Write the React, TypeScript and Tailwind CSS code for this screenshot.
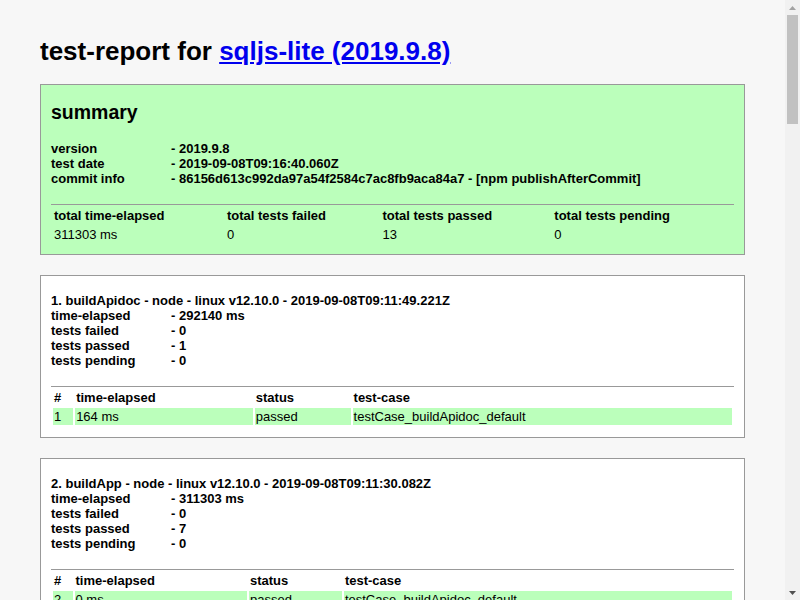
import React from "react";

type TestCase = { elapsed: string; status: string; name: string };

type Report = {
  title: string;
  elapsed: string;
  failed: number;
  passed: number;
  pending: number;
  tests: TestCase[];
};

const reports: Report[] = [
  {
    title: "1. buildApidoc - node - linux v12.10.0 - 2019-09-08T09:11:49.221Z",
    elapsed: "292140 ms",
    failed: 0,
    passed: 1,
    pending: 0,
    tests: [{ elapsed: "164 ms", status: "passed", name: "testCase_buildApidoc_default" }],
  },
  {
    title: "2. buildApp - node - linux v12.10.0 - 2019-09-08T09:11:30.082Z",
    elapsed: "311303 ms",
    failed: 0,
    passed: 7,
    pending: 0,
    tests: [
      { elapsed: "0 ms", status: "passed", name: "testCase_buildApidoc_default" },
      { elapsed: "2118 ms", status: "passed", name: "testCase_buildApp_default" },
      { elapsed: "1 ms", status: "passed", name: "testCase_buildLib_default" },
      { elapsed: "3 ms", status: "passed", name: "testCase_buildReadme_default" },
      { elapsed: "2 ms", status: "passed", name: "testCase_buildTest_default" },
      { elapsed: "4 ms", status: "passed", name: "testCase_webpage_default" },
      { elapsed: "1 ms", status: "passed", name: "testCase_buildApp_error" },
    ],
  },
  {
    title: "3. test - node - linux v12.10.0 - 2019-09-08T09:16:38.921Z",
    elapsed: "1139 ms",
    failed: 0,
    passed: 5,
    pending: 0,
    tests: [
      { elapsed: "12 ms", status: "passed", name: "testCase_sqljsExec_default" },
      { elapsed: "8 ms", status: "passed", name: "testCase_sqljsInit_default" },
      { elapsed: "3 ms", status: "passed", name: "testCase_sqljsRun_default" },
      { elapsed: "1 ms", status: "passed", name: "testCase_sqljsExport_default" },
      { elapsed: "2 ms", status: "passed", name: "testCase_sqljsClose_default" },
    ],
  },
];

const font = { fontFamily: '"Liberation Sans", Arial, sans-serif' };

const InfoRows = ({ rows }: { rows: [string, string][] }) => (
  <div className="grid grid-cols-[120px_1fr] font-bold leading-[15px]">
    {rows.map(([label, value]) => (
      <React.Fragment key={label}>
        <div>{label}</div>
        <div>- {value}</div>
      </React.Fragment>
    ))}
  </div>
);

const ReportBox = ({ report, offset }: { report: Report; offset: number }) => (
  <div className="mt-5 border border-[#999] bg-white px-2.5 pb-[10px] pt-[17px]">
    <div className="font-bold leading-[15px]">{report.title}</div>
    <InfoRows
      rows={[
        ["time-elapsed", report.elapsed],
        ["tests failed", String(report.failed)],
        ["tests passed", String(report.passed)],
        ["tests pending", String(report.pending)],
      ]}
    />
    <table className="mt-[18px] w-full border-separate border-spacing-0.5 border-t border-[#999] leading-[15px]">
      <thead>
        <tr>
          <th className="p-px text-left font-bold">#</th>
          <th className="p-px text-left font-bold">time-elapsed</th>
          <th className="p-px text-left font-bold">status</th>
          <th className="p-px text-left font-bold">test-case</th>
        </tr>
      </thead>
      <tbody>
        {report.tests.map((test, i) => (
          <tr key={test.name + i}>
            <td className="bg-[#bbffbb] p-px">{offset + i + 1}</td>
            <td className="bg-[#bbffbb] p-px">{test.elapsed}</td>
            <td className="bg-[#bbffbb] p-px">{test.status}</td>
            <td className="bg-[#bbffbb] p-px">{test.name}</td>
          </tr>
        ))}
      </tbody>
    </table>
  </div>
);

// browser scrollbar as seen in the screenshot
const Scrollbar = () => (
  <div className="flex w-[15px] shrink-0 flex-col items-center bg-[#f1f1f1]">
    <div className="flex h-[15px] items-center justify-center">
      <svg width="7" height="4" viewBox="0 0 7 4">
        <path d="M3.5 0 L7 4 L0 4 Z" fill="#a3a3a3" />
      </svg>
    </div>
    <div className="h-[109px] w-[11px] bg-[#c1c1c1]" />
    <div className="flex-1" />
    <div className="flex h-[15px] items-center justify-center">
      <svg width="7" height="4" viewBox="0 0 7 4">
        <path d="M0 0 L7 0 L3.5 4 Z" fill="#505050" />
      </svg>
    </div>
  </div>
);

const App = () => {
  let offset = 0;

  return (
    <div className="flex h-screen overflow-hidden bg-[#f7f7f7] text-[13px] text-black" style={font}>
      <div className="min-w-0 flex-1 overflow-hidden px-10 pb-10 pt-9">
        <h1 className="mb-[18px] text-[26px] font-bold leading-[30px]">
          test-report for{" "}
          <a href="#" className="text-[#0000ee] underline">
            sqljs-lite (2019.9.8)
          </a>
        </h1>

        <div className="border border-[#999] bg-[#bbffbb] px-2.5 pb-[9px] pt-4">
          <h2 className="mb-[18px] text-[19.5px] font-bold leading-[22px]">summary</h2>
          <InfoRows
            rows={[
              ["version", "2019.9.8"],
              ["test date", "2019-09-08T09:16:40.060Z"],
              ["commit info", "86156d613c992da97a54f2584c7ac8fb9aca84a7 - [npm publishAfterCommit]"],
            ]}
          />
          <table className="mt-[18px] w-full border-separate border-spacing-0.5 border-t border-[#999] leading-[15px]">
            <thead>
              <tr>
                <th className="p-px text-left font-bold">total time-elapsed</th>
                <th className="p-px text-left font-bold">total tests failed</th>
                <th className="p-px text-left font-bold">total tests passed</th>
                <th className="p-px text-left font-bold">total tests pending</th>
              </tr>
            </thead>
            <tbody>
              <tr>
                <td className="p-px">311303 ms</td>
                <td className="p-px">0</td>
                <td className="p-px">13</td>
                <td className="p-px">0</td>
              </tr>
            </tbody>
          </table>
        </div>

        {reports.map((report) => {
          const box = <ReportBox key={report.title} report={report} offset={offset} />;
          offset += report.tests.length;
          return box;
        })}

        <div className="mt-5 text-center">
          [ this document was created with{" "}
          <a href="#" className="text-[#0000ee] underline">
            utility2
          </a>{" "}
          ]
        </div>
      </div>
      <Scrollbar />
    </div>
  );
};

export default App;
